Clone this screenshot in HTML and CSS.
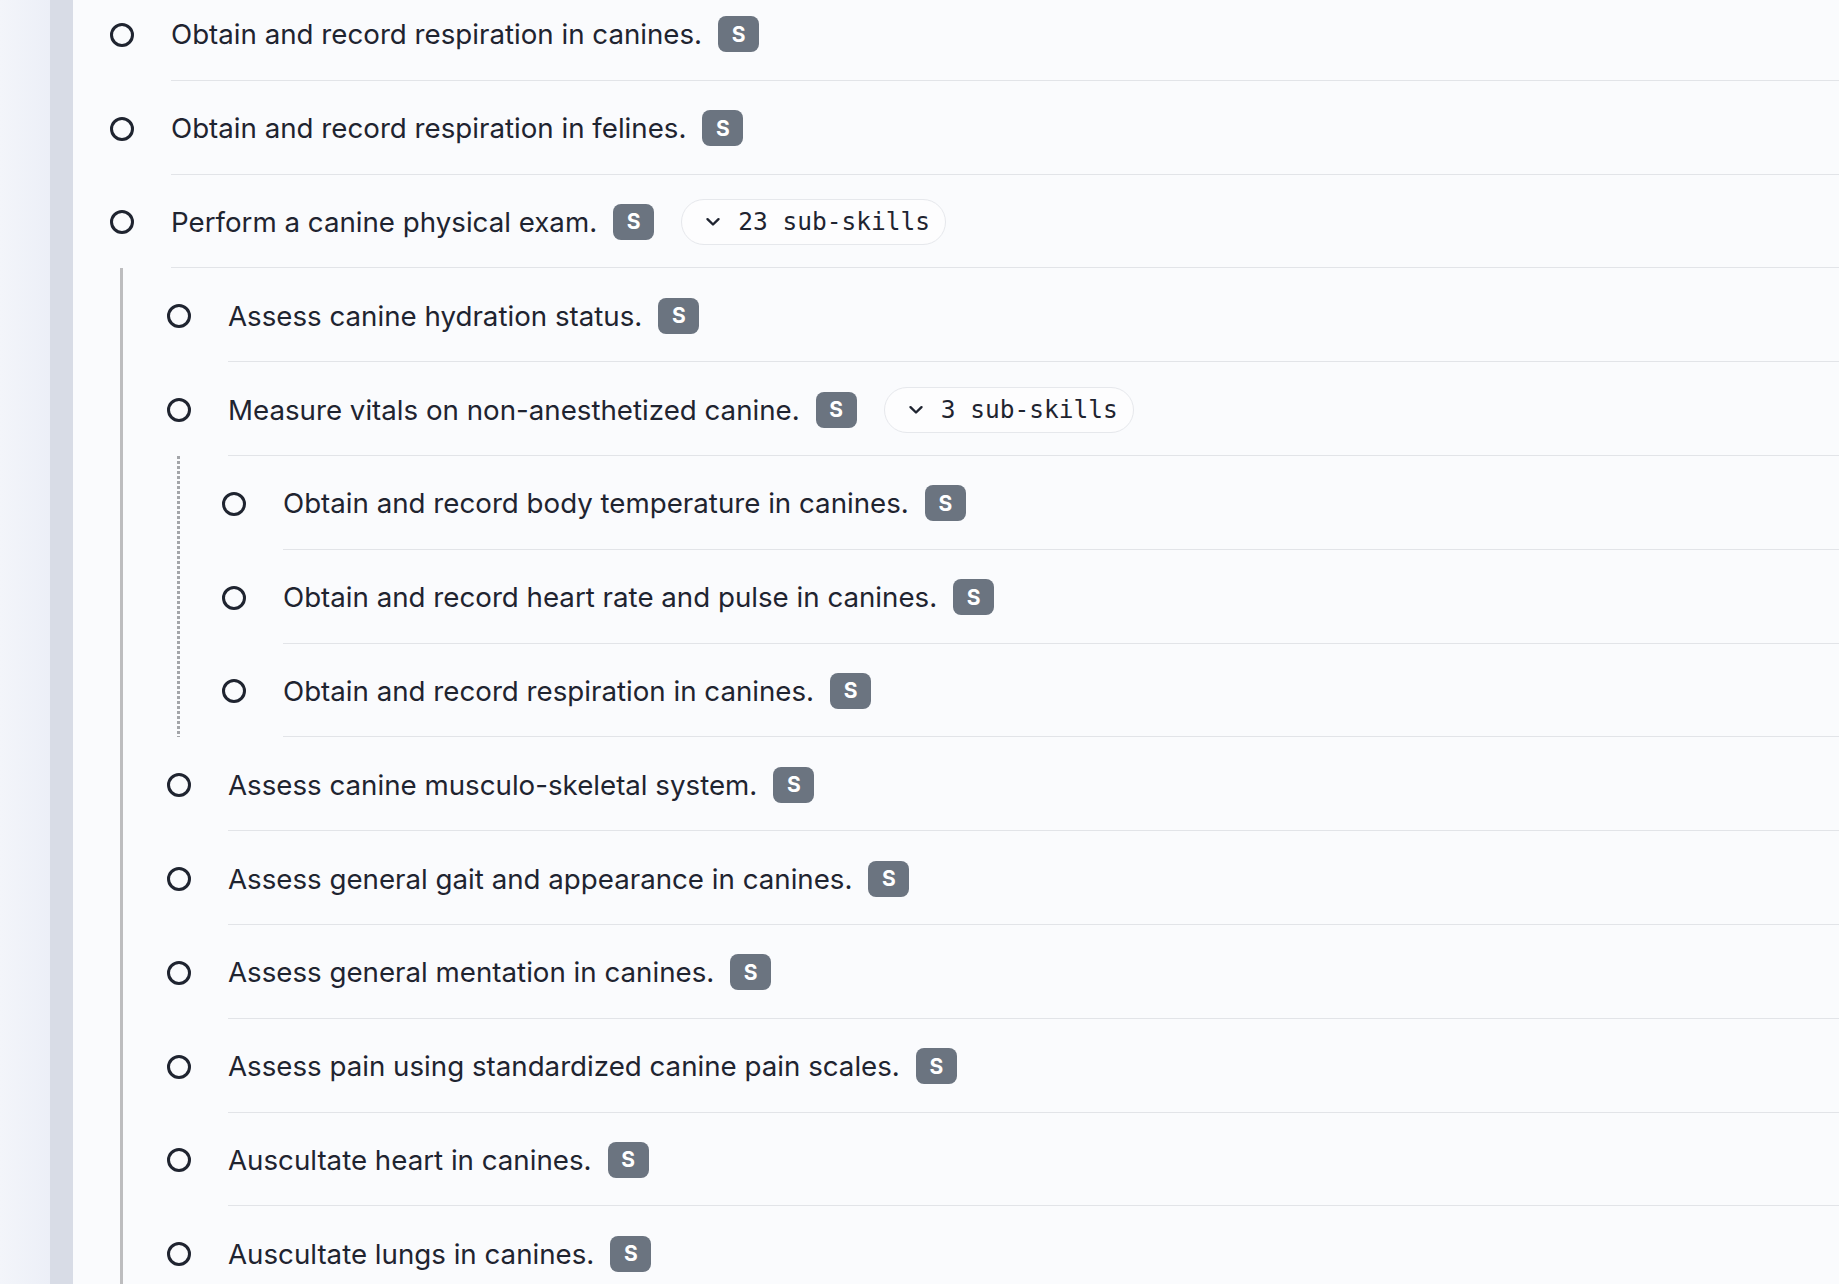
FILE: index.html
```html
<!DOCTYPE html>
<html lang="en">
<head>
<meta charset="utf-8">
<title>Skills</title>
<link rel="stylesheet" href="styles.css">
</head>
<body>
<div class="app">
  <div class="backdrop"></div>
  <div class="rail"></div>
  <main class="main">
    <ul class="tree lvl0">
      <li class="node">
        <div class="row"><span class="check"></span><div class="body"><span class="label">Obtain and record respiration in canines.</span><span class="badge">S</span></div></div>
      </li>
      <li class="node">
        <div class="row"><span class="check"></span><div class="body"><span class="label">Obtain and record respiration in felines.</span><span class="badge">S</span></div></div>
      </li>
      <li class="node">
        <div class="row"><span class="check"></span><div class="body"><span class="label">Perform a canine physical exam.</span><span class="badge">S</span><button class="pill"><svg class="chev" viewBox="0 0 16 10" width="16" height="10"><path d="M2.5 2.2 L8 7.5 L13.5 2.2" fill="none" stroke="#1f2430" stroke-width="2.4" stroke-linecap="round" stroke-linejoin="round"/></svg><span>23 sub-skills</span></button></div></div>
        <ul class="tree lvl1">
          <li class="node">
            <div class="row"><span class="check"></span><div class="body"><span class="label">Assess canine hydration status.</span><span class="badge">S</span></div></div>
          </li>
          <li class="node">
            <div class="row"><span class="check"></span><div class="body"><span class="label">Measure vitals on non-anesthetized canine.</span><span class="badge">S</span><button class="pill"><svg class="chev" viewBox="0 0 16 10" width="16" height="10"><path d="M2.5 2.2 L8 7.5 L13.5 2.2" fill="none" stroke="#1f2430" stroke-width="2.4" stroke-linecap="round" stroke-linejoin="round"/></svg><span>3 sub-skills</span></button></div></div>
            <ul class="tree lvl2">
              <li class="node">
                <div class="row"><span class="check"></span><div class="body"><span class="label">Obtain and record body temperature in canines.</span><span class="badge">S</span></div></div>
              </li>
              <li class="node">
                <div class="row"><span class="check"></span><div class="body"><span class="label">Obtain and record heart rate and pulse in canines.</span><span class="badge">S</span></div></div>
              </li>
              <li class="node">
                <div class="row"><span class="check"></span><div class="body"><span class="label">Obtain and record respiration in canines.</span><span class="badge">S</span></div></div>
              </li>
            </ul>
          </li>
          <li class="node">
            <div class="row"><span class="check"></span><div class="body"><span class="label">Assess canine musculo-skeletal system.</span><span class="badge">S</span></div></div>
          </li>
          <li class="node">
            <div class="row"><span class="check"></span><div class="body"><span class="label">Assess general gait and appearance in canines.</span><span class="badge">S</span></div></div>
          </li>
          <li class="node">
            <div class="row"><span class="check"></span><div class="body"><span class="label">Assess general mentation in canines.</span><span class="badge">S</span></div></div>
          </li>
          <li class="node">
            <div class="row"><span class="check"></span><div class="body"><span class="label">Assess pain using standardized canine pain scales.</span><span class="badge">S</span></div></div>
          </li>
          <li class="node">
            <div class="row"><span class="check"></span><div class="body"><span class="label">Auscultate heart in canines.</span><span class="badge">S</span></div></div>
          </li>
          <li class="node">
            <div class="row"><span class="check"></span><div class="body"><span class="label">Auscultate lungs in canines.</span><span class="badge">S</span></div></div>
          </li>
        </ul>
      </li>
    </ul>
  </main>
</div>
</body>
</html>
```
FILE: styles.css
```css
* { box-sizing: border-box; }
html, body {
  margin: 0;
  padding: 0;
  height: 100%;
  overflow: hidden;
}
body {
  font-family: Inter, "Noto Sans", sans-serif;
  color: #1f2430;
  background: #fafbfd;
}
.app {
  display: flex;
  height: 1284px;
  overflow: hidden;
}
.backdrop {
  width: 50px;
  flex: none;
  background: linear-gradient(90deg, #f3f5fa 0%, #eceff7 100%);
}
.rail {
  width: 23px;
  flex: none;
  background: #d8dce6;
}
.main {
  flex: 1;
  background: #fafbfd;
  overflow: hidden;
}
.tree {
  list-style: none;
  margin: 0;
  padding: 0;
}
.lvl0 {
  margin-top: -13px;
  padding-left: 37px;
}
.lvl1 {
  margin-left: 10px;
  border-left: 3px solid #bdbdbf;
  padding-left: 44px;
}
.lvl2 {
  margin-left: 10px;
  padding-left: 45px;
  background-image: repeating-linear-gradient(to bottom, #a3a5a9 0, #a3a5a9 3px, transparent 3px, transparent 5px);
  background-size: 3px 100%;
  background-position: left top;
  background-repeat: no-repeat;
}
.row {
  display: flex;
  align-items: stretch;
  height: 93.8px;
  padding-top: 2px;
}
.check {
  flex: none;
  align-self: center;
  width: 24px;
  height: 24px;
  border: 3px solid #1f2430;
  border-radius: 50%;
  margin-right: 37px;
}
.body {
  flex: 1;
  display: flex;
  align-items: center;
  border-bottom: 1px solid #e2e4e8;
  min-width: 0;
}
.label {
  font-size: 27.7px;
  white-space: nowrap;
}
.badge {
  flex: none;
  margin-left: 16px;
  width: 41px;
  height: 36px;
  border-radius: 8px;
  background: #6b7480;
  color: #ffffff;
  font-weight: 700;
  font-size: 21px;
  display: flex;
  align-items: center;
  justify-content: center;
}
.pill {
  flex: none;
  margin-left: 27px;
  height: 46px;
  padding: 0 15px 0 23px;
  border: 1px solid #e6e8ec;
  border-radius: 23px;
  background: #fdfdfe;
  display: flex;
  align-items: center;
  gap: 17px;
  font-family: "DejaVu Sans Mono", monospace;
  font-size: 24.5px;
  color: #1f2430;
  cursor: pointer;
}
.chev {
  display: block;
}
```
